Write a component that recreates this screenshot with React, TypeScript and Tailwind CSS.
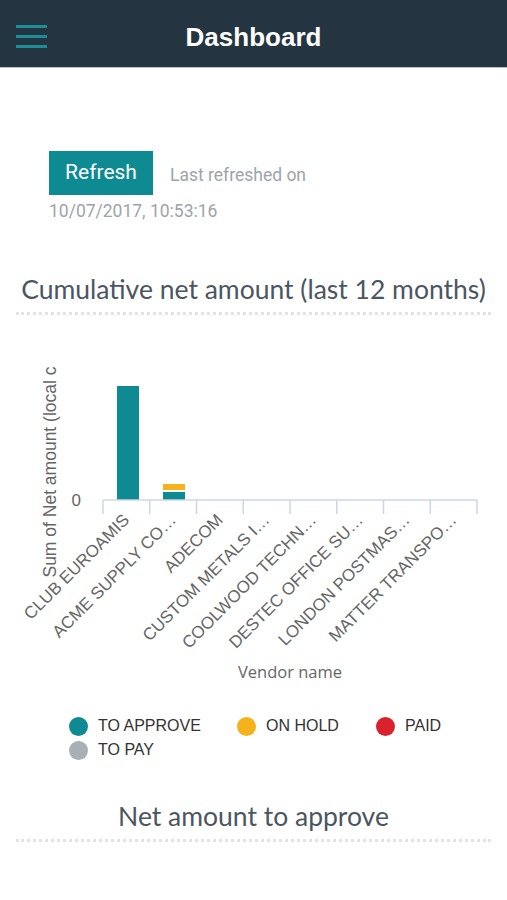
import React from "react";

const vendors = [
  "CLUB EUROAMIS",
  "ACME SUPPLY CO…",
  "ADECOM",
  "CUSTOM METALS I…",
  "COOLWOOD TECHN…",
  "DESTEC OFFICE SU…",
  "LONDON POSTMAS…",
  "MATTER TRANSPO…",
];

const legend = [
  { label: "TO APPROVE", color: "bg-[#0e8a93]" },
  { label: "ON HOLD", color: "bg-[#f6b21b]" },
  { label: "PAID", color: "bg-[#d9222e]" },
  { label: "TO PAY", color: "bg-[#a8afb5]" },
];

const labelFont = "'Liberation Sans', Arial, sans-serif";
const chartFont = "'Open Sans', sans-serif";

function SectionTitle(props: { children: React.ReactNode }) {
  return (
    <div className="px-4">
      <div className="text-center font-['Lato',sans-serif] text-[26.5px] leading-[30px] text-[#4b5661]">
        {props.children}
      </div>
      <div className="mt-[8px] border-t-[3px] border-dotted border-[#e3e3e3]" />
    </div>
  );
}

function Chart() {
  const x0 = 103;
  const step = 46.75;
  const axisY = 180;
  return (
    <svg width="507" height="370" className="block">
      <text
        x="0"
        y="0"
        transform="translate(56 152) rotate(-90)"
        textAnchor="middle"
        fill="#666666"
        fontFamily={labelFont}
        fontSize="17.5"
      >
        Sum of Net amount (local c
      </text>
      <text x="81" y="186" textAnchor="end" fill="#666666" fontFamily={labelFont} fontSize="17">
        0
      </text>
      <rect x="117" y="66" width="22" height="114" fill="#0e8a93" />
      <rect x="163" y="172" width="22" height="8" fill="#0e8a93" />
      <rect x="163" y="164" width="22" height="6" fill="#f6b21b" />
      <line x1={x0} y1={axisY} x2={x0 + step * 8} y2={axisY} stroke="#ccd6eb" strokeWidth="1.5" />
      {Array.from({ length: 9 }).map((_, i) => (
        <line
          key={i}
          x1={x0 + step * i}
          y1={axisY}
          x2={x0 + step * i}
          y2={axisY + 14}
          stroke="#ccd6eb"
          strokeWidth="1.5"
        />
      ))}
      {vendors.map((v, i) => {
        const cx = x0 + step * i + step / 2 + 4;
        return (
          <text
            key={v}
            x="0"
            y="0"
            transform={`translate(${cx} 201) rotate(-45)`}
            textAnchor="end"
            fill="#666666"
            fontFamily={labelFont}
            fontSize="17"
          >
            {v}
          </text>
        );
      })}
      <text x="290" y="358" textAnchor="middle" fill="#666666" fontFamily={chartFont} fontSize="16.5">
        Vendor name
      </text>
    </svg>
  );
}

export default function App() {
  return (
    <div className="min-h-[900px] w-[507px] bg-white">
      <div className="relative flex h-[68px] items-center justify-center border-b border-[#b8c0c8] bg-[#253441] pt-[7px]">
        <div className="absolute left-[16px] top-[25px] flex w-[31px] flex-col gap-[7px]">
          <span className="h-[3px] bg-[#1a8f98]" />
          <span className="h-[3px] bg-[#1a8f98]" />
          <span className="h-[3px] bg-[#1a8f98]" />
        </div>
        <div className="font-['Liberation_Sans',sans-serif] text-[26px] font-bold text-white">Dashboard</div>
      </div>

      <div className="pl-[49px] pt-[83px]">
        <div className="flex items-center gap-[17px]">
          <button className="h-[44px] w-[104px] bg-[#0e8a93] font-['Roboto',sans-serif] text-[21px] text-white">
            Refresh
          </button>
          <span className="pt-[4px] font-['Roboto',sans-serif] text-[17.5px] text-[#9ea4a9]">Last refreshed on</span>
        </div>
        <div className="mt-[4px] font-['Roboto',sans-serif] text-[17.5px] leading-[24px] text-[#9ea4a9]">
          10/07/2017, 10:53:16
        </div>
      </div>

      <div className="mt-[51px]">
        <SectionTitle>Cumulative net amount (last 12 months)</SectionTitle>
      </div>

      <div className="mt-[5px]">
        <Chart />
      </div>

      <div className="ml-[69px] mt-[26px] grid w-[400px] grid-cols-[168px_139px_1fr] gap-y-[4px] font-['Liberation_Sans',sans-serif] text-[16px] text-[#333333]">
        {legend.map((l) => (
          <div key={l.label} className="flex items-center gap-[10px]">
            <span className={`h-[19px] w-[19px] rounded-full ${l.color}`} />
            <span className="leading-[20px]">{l.label}</span>
          </div>
        ))}
      </div>

      <div className="mt-[41px]">
        <SectionTitle>Net amount to approve</SectionTitle>
      </div>
    </div>
  );
}
